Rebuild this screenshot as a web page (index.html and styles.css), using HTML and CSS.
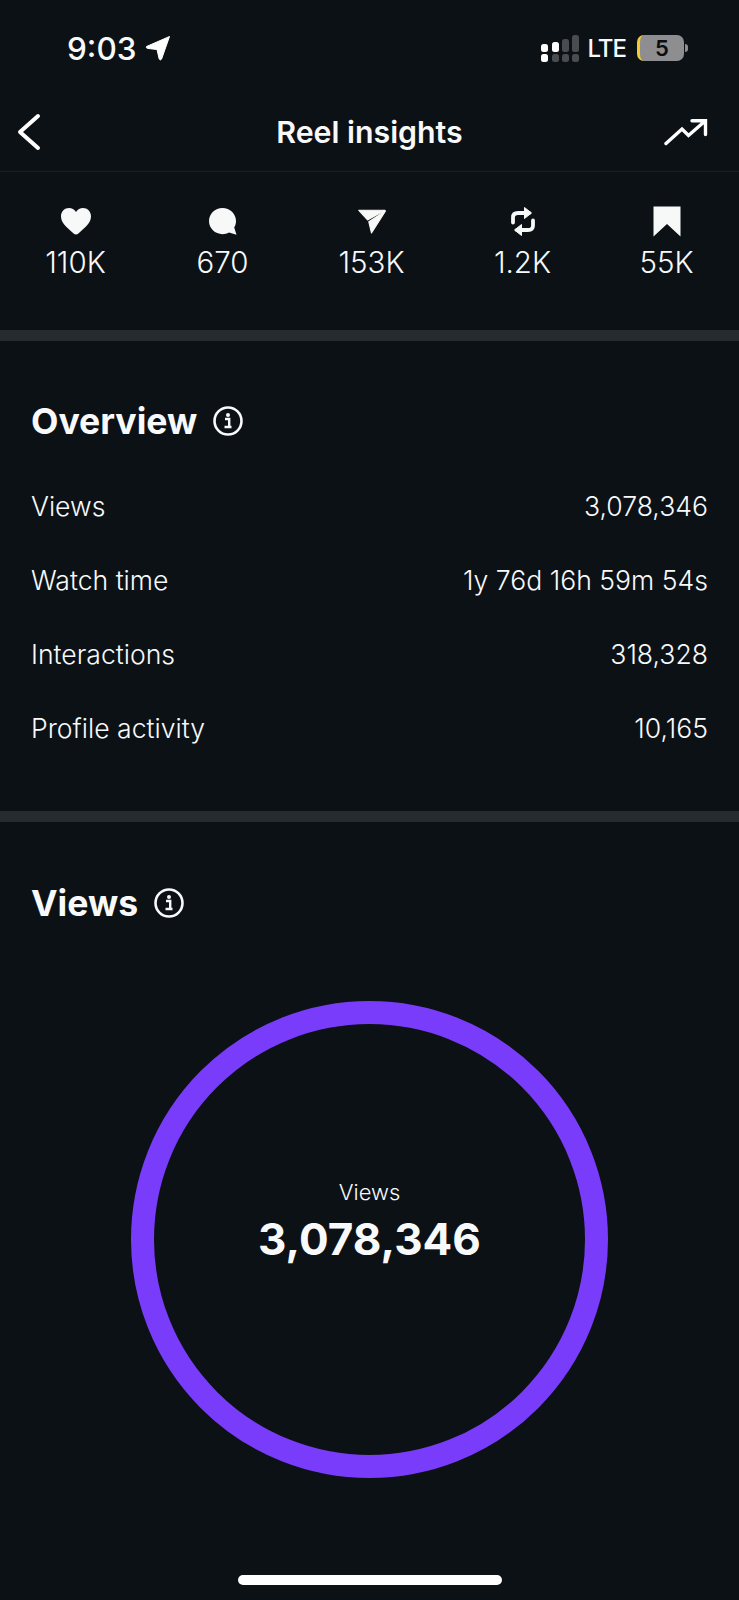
FILE: index.html
```html
<!DOCTYPE html>
<html>

<head>
  <title>Reel insights</title>
  <link rel="stylesheet" href="styles.css">
</head>

<body>
  <div class="status-bar">
    <div class="status-left">
      <span class="clock">9:03</span>
      <svg class="location" width="26" height="26" viewBox="0 0 26 26">
        <path d="M24.5 1.5 L1.5 11.5 Q0.8 13 2.5 13.4 L12 14.5 L14.2 24 Q15.5 25.8 16.6 24 Z" fill="#fff" stroke="#fff" stroke-width="1" stroke-linejoin="round" />
      </svg>
    </div>
    <div class="status-right">
      <svg class="signal" width="38" height="27" viewBox="0 0 38 27">
        <rect x="0" y="19" width="7" height="8" rx="2.5" fill="#fff" />
        <rect x="11" y="19" width="7" height="8" rx="2.5" fill="#4a4d50" />
        <rect x="21" y="19" width="7" height="8" rx="2.5" fill="#4a4d50" />
        <rect x="31" y="19" width="7" height="8" rx="2.5" fill="#4a4d50" />
        <rect x="0" y="9" width="7" height="8" rx="2.5" fill="#fff" />
        <rect x="11" y="7" width="7" height="10" rx="2.5" fill="#fff" />
        <rect x="21" y="4" width="7" height="13" rx="2.5" fill="#4a4d50" />
        <rect x="31" y="0" width="7" height="17" rx="2.5" fill="#4a4d50" />
      </svg>
      <span class="lte">LTE</span>
      <div class="battery">
        <div class="battery-body">5</div>
        <div class="battery-tip"></div>
      </div>
    </div>
  </div>

  <div class="nav">
    <div class="nav-side">
      <svg class="back" width="26" height="38" viewBox="0 0 26 38">
        <path d="M22 3 L4 19 L22 35" fill="none" stroke="#fff" stroke-width="4" stroke-linecap="round" stroke-linejoin="round" />
      </svg>
    </div>
    <h1>Reel insights</h1>
    <div class="nav-side nav-side-right">
      <svg width="44" height="28" viewBox="0 0 44 28">
        <path d="M2 25.500 L18 11 L24.500 17.500 L40.500 3.500 M28 2.800 H41.500 V16.500" fill="none" stroke="#fff" stroke-width="3.400" stroke-linecap="round" stroke-linejoin="miter" />
      </svg>
    </div>
  </div>

  <div class="stats">
    <div class="stat stat-likes">
      <svg width="30" height="27" viewBox="0 0 30 27">
        <path d="M15 26.5 Q13.8 26.5 12.6 25.4 C5 19 0 14.6 0 8.3 C0 3.4 3.7 0 8 0 C10.8 0 13.4 1.4 15 4 C16.6 1.4 19.2 0 22 0 C26.3 0 30 3.4 30 8.3 C30 14.6 25 19 17.4 25.4 Q16.2 26.5 15 26.5 Z" fill="#f7f8f8" />
      </svg>
      <span>110K</span>
    </div>
    <div class="stat stat-comments">
      <svg width="28" height="27" viewBox="0 0 28 27">
        <path d="M13.5 0 C21 0 27 5.8 27 13 C27 15.4 26.4 17.6 25.2 19.5 L27.5 26.8 L20 24.6 C18 25.7 15.8 26.2 13.5 26.2 C6 26.2 0 20.4 0 13.1 C0 5.8 6 0 13.5 0 Z" fill="#f7f8f8" />
      </svg>
      <span>670</span>
    </div>
    <div class="stat stat-shares">
      <svg width="28" height="31" viewBox="0 -3.500 28 31">
        <path d="M0.800 0.800 H27 L9.500 10.500 Z M27.500 1.500 L13.500 23.500 L10.800 12.300 Z" fill="#f7f8f8" stroke="#f7f8f8" stroke-width="1.100" stroke-linejoin="round" />
      </svg>
      <span>153K</span>
    </div>
    <div class="stat stat-reposts">
      <svg width="26" height="30" viewBox="0 0 26 30">
        <path d="M3 16 V11 Q3 6.500 8 6.500 H19 M23 14 V19 Q23 23.500 18 23.500 H7" fill="none" stroke="#f7f8f8" stroke-width="3.800" stroke-linecap="round" />
        <path d="M14.500 1 L21.500 6.500 L14.500 12 Z M11.500 18 L4.500 23.500 L11.500 29 Z" fill="#f7f8f8" stroke="#f7f8f8" stroke-width="1" stroke-linejoin="round" />
      </svg>
      <span>1.2K</span>
    </div>
    <div class="stat stat-saves">
      <svg width="28" height="31" viewBox="0 0 28 31">
        <path d="M0.500 0.500 H27.500 V30.500 L14 18 L0.500 30.500 Z" fill="#f7f8f8" />
      </svg>
      <span>55K</span>
    </div>
  </div>

  <div class="divider"></div>

  <section class="overview">
    <div class="section-title">
      <h2>Overview</h2>
      <svg class="info" width="30" height="30" viewBox="0 0 30 30">
        <circle cx="15" cy="15" r="13.500" fill="none" stroke="#f7f9fb" stroke-width="2.600" />
        <circle cx="15" cy="9" r="2" fill="#f7f9fb" />
        <path d="M12 13 H16.200 V20.500 M11.500 21 H18.500" fill="none" stroke="#f7f9fb" stroke-width="2.400" />
      </svg>
    </div>
    <div class="row"><span>Views</span><span>3,078,346</span></div>
    <div class="row"><span>Watch time</span><span>1y 76d 16h 59m 54s</span></div>
    <div class="row"><span>Interactions</span><span>318,328</span></div>
    <div class="row"><span>Profile activity</span><span>10,165</span></div>
  </section>

  <div class="divider"></div>

  <section class="views">
    <div class="section-title">
      <h2>Views</h2>
      <svg class="info" width="30" height="30" viewBox="0 0 30 30">
        <circle cx="15" cy="15" r="13.500" fill="none" stroke="#f7f9fb" stroke-width="2.600" />
        <circle cx="15" cy="9" r="2" fill="#f7f9fb" />
        <path d="M12 13 H16.200 V20.500 M11.500 21 H18.500" fill="none" stroke="#f7f9fb" stroke-width="2.400" />
      </svg>
    </div>
    <div class="ring">
      <span class="ring-label">Views</span>
      <span class="ring-value">3,078,346</span>
    </div>
  </section>

  <div class="home-indicator"></div>
</body>

</html>
```

FILE: styles.css
```css
html,
body {
  margin: 0;
  height: 1600px;
  overflow: hidden;
}

body {
  position: relative;
  font-family: "Inter", "Liberation Sans", sans-serif;
  background-color: #0c1115;
  color: #f7f9fb;
}

.status-bar {
  display: flex;
  justify-content: space-between;
  align-items: center;
  height: 92px;
  padding: 4px 67px 0;
  box-sizing: border-box;
}

.status-left,
.status-right {
  display: flex;
  align-items: center;
}

.clock {
  font-size: 31.5px;
  font-weight: 500;
}

.location {
  margin-left: 9px;
}

.status-right {
  margin-right: -16px;
}

.lte {
  font-size: 24px;
  font-weight: 500;
  letter-spacing: -1px;
  margin-left: 9px;
}

.battery {
  display: flex;
  align-items: center;
  margin-left: 11px;
}

.battery-body {
  width: 44px;
  height: 26px;
  border-radius: 7px;
  background-color: #8e8e90;
  border-left: 3px solid #f2cb2e;
  box-sizing: content-box;
  color: #0b0d10;
  font-size: 22px;
  font-weight: 600;
  line-height: 26px;
  text-align: center;
}

.battery-tip {
  width: 3px;
  height: 8px;
  margin-left: 1px;
  border-radius: 0 3px 3px 0;
  background-color: #8e8e90;
}

.nav {
  display: flex;
  align-items: center;
  height: 79px;
  padding: 0 31px;
  border-bottom: 1px solid #1a1f23;
}

.nav-side {
  display: flex;
  flex: 1;
}

.nav-side-right {
  justify-content: flex-end;
}

.back {
  margin-left: -15px;
}

h1 {
  margin: 0;
  font-size: 30.3px;
  font-weight: 600;
}

.stats {
  display: flex;
  height: 158px;
  padding-top: 34px;
  box-sizing: border-box;
}

.stat {
  display: flex;
  flex-direction: column;
  align-items: center;
  font-size: 29.5px;
  font-weight: 350;
  gap: 7px;
}

.stat-likes {
  width: 151px;
}

.stat-comments {
  width: 143px;
}

.stat-shares {
  width: 155px;
}

.stat-reposts {
  width: 147px;
}

.stat-saves {
  width: 141px;
}

.stat svg {
  height: 31px;
}

.divider {
  height: 11px;
  background-color: #262b2f;
}

.overview {
  height: 470px;
  padding: 0 31px;
  box-sizing: border-box;
}

.views {
  padding: 1px 31px 0;
}

.section-title {
  display: flex;
  align-items: center;
  gap: 16px;
  padding-top: 56px;
  height: 48px;
}

h2 {
  margin: 0;
  font-size: 35.6px;
  font-weight: 700;
}

.overview .section-title {
  margin-bottom: 24px;
}

.row {
  display: flex;
  justify-content: space-between;
  align-items: center;
  height: 74px;
  font-size: 26.6px;
  font-weight: 350;
}

.ring {
  display: flex;
  flex-direction: column;
  align-items: center;
  justify-content: center;
  width: 477px;
  height: 477px;
  margin: 74px auto 0;
  padding-bottom: 34px;
  border: 23px solid #7a3cfb;
  border-radius: 50%;
  box-sizing: border-box;
}

.ring-label {
  font-size: 22px;
  font-weight: 350;
  margin-bottom: 7px;
}

.ring-value {
  font-size: 44px;
  font-weight: 700;
}

.home-indicator {
  position: absolute;
  left: 238px;
  bottom: 15px;
  width: 264px;
  height: 10px;
  border-radius: 5px;
  background-color: #fff;
}
```
